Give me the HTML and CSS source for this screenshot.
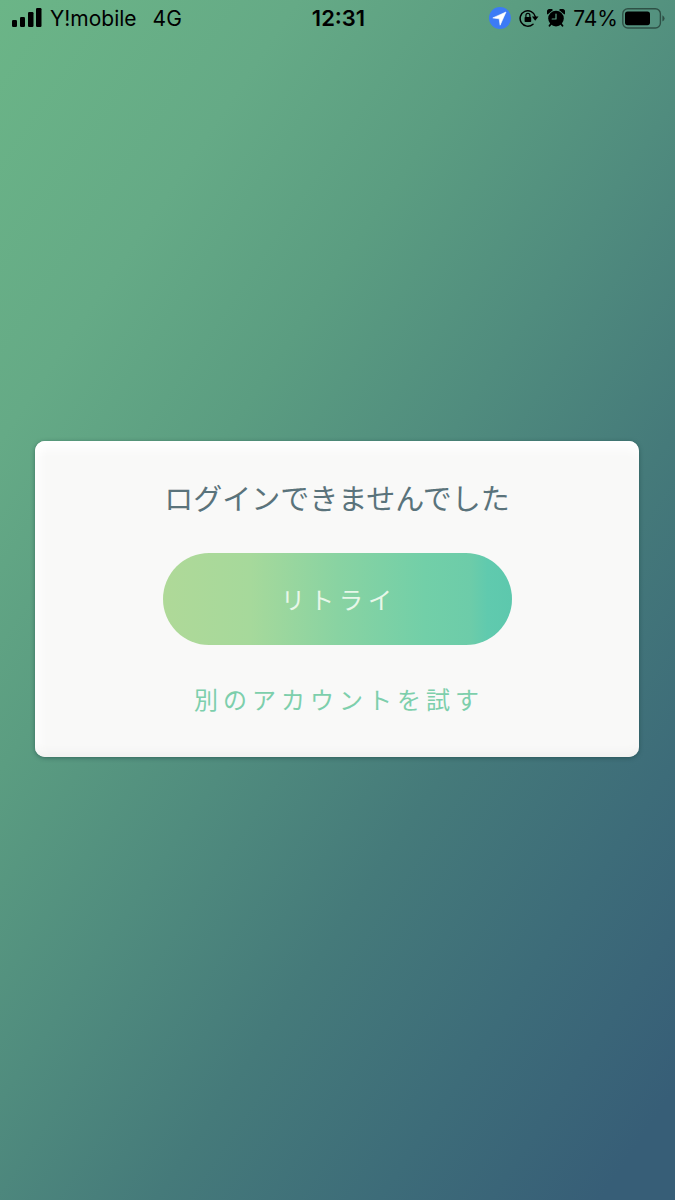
FILE: index.html
```html
<!DOCTYPE html>
<html lang="ja">
<head>
<meta charset="utf-8">
<meta name="viewport" content="width=device-width, initial-scale=1">
<title>ログイン</title>
<link rel="stylesheet" href="styles.css">
</head>
<body>
<div class="screen">
  <header class="status">
    <div class="status-left">
      <svg class="signal" viewBox="0 0 30 20" aria-hidden="true">
        <rect x="0" y="12" width="5" height="7" rx="1.2"/>
        <rect x="8" y="9" width="5" height="10" rx="1.2"/>
        <rect x="16" y="4" width="5.5" height="15" rx="1.2"/>
        <rect x="24" y="0" width="5.5" height="19" rx="1.2"/>
      </svg>
      <span>Y!mobile</span>
      <span class="network">4G</span>
    </div>
    <time class="clock">12:31</time>
    <div class="status-right">
      <svg class="location" viewBox="0 0 22 22" aria-hidden="true">
        <circle cx="11" cy="11" r="11" fill="#3c7bf6"/>
        <path d="M17 5 L3.8 10.9 L10.2 11.8 L11.1 18.2 Z" fill="#fff" stroke="#fff" stroke-width=".6" stroke-linejoin="round"/>
      </svg>
      <svg class="lock" viewBox="0 0 20 20" aria-hidden="true">
        <path d="M14 16.2 A7.7 7.7 0 1 1 16.3 8.6" fill="none" stroke="#000" stroke-width="1.5" stroke-linecap="round"/>
        <path d="M12.9 8.6 H19.5 L16.2 12.8 Z"/>
        <rect x="5.6" y="9" width="6.6" height="5" rx=".7"/>
        <path d="M6.9 9 V7.4 a2 2 0 0 1 4 0 V9" fill="none" stroke="#000" stroke-width="1.2"/>
      </svg>
      <svg class="alarm" viewBox="0 0 18 18" aria-hidden="true">
        <circle cx="9" cy="9.6" r="7.8"/>
        <path d="M.6 5.6 A3.2 3.2 0 0 1 6 1 Z M17.4 5.6 A3.2 3.2 0 0 0 12 1 Z"/>
        <path d="M4.2 14.6 L2.5 16.8 M13.8 14.6 L15.5 16.8" stroke="#000" stroke-width="1.8" stroke-linecap="round"/>
        <path d="M9 5 V10 H5.2" fill="none" stroke="#5b9e83" stroke-width="1.2" stroke-linecap="round" stroke-linejoin="round"/>
      </svg>
      <span class="percent">74%</span>
      <svg class="battery" viewBox="0 0 43 21" aria-hidden="true">
        <rect x=".8" y=".8" width="37.6" height="19.2" rx="5" fill="none" stroke="#000" stroke-opacity=".45" stroke-width="1.4"/>
        <rect x="3" y="3.4" width="25" height="13.8" rx="2.6"/>
        <path d="M40.4 7.2 Q42.6 8.4 42.6 10.4 T40.4 13.6 Z" fill-opacity=".45"/>
      </svg>
    </div>
  </header>
  <main class="stage">
    <section class="dialog" aria-labelledby="message">
      <h1 class="message" id="message">ログインできませんでした</h1>
      <button class="retry" type="button">リトライ</button>
      <a class="other" href="#">別のアカウントを試す</a>
    </section>
  </main>
</div>
</body>
</html>
```
FILE: styles.css
```css
* { box-sizing: border-box; }

body {
  margin: 0;
  font-family: Inter, "Noto Sans CJK JP", sans-serif;
  color: #000;
}

.screen {
  display: grid;
  min-height: 100vh;
  background: linear-gradient(124deg, #6bb587 0%, #65aa86 20%, #5b9d81 35%, #508c7e 50%, #457a7a 65%, #3d6c79 80%, #375e77 95%, #375e77 100%);
}

.status,
.stage {
  grid-area: 1 / 1;
}

.status {
  display: grid;
  grid-template-columns: 1fr auto 1fr;
  align-items: center;
  align-self: start;
  height: 36px;
  padding: 0 10px 0 12px;
  font-size: 21px;
  line-height: 29px;
}

.status-left,
.status-right {
  display: flex;
  align-items: center;
}

.status-right { justify-content: flex-end; }

.signal {
  width: 30px;
  height: 20px;
  margin-right: 8px;
}

.network { margin-left: 16px; }

.clock {
  font-size: 22px;
  font-weight: 600;
}

.location { width: 22px; height: 22px; }
.lock { width: 20px; height: 20px; margin-left: 8px; }
.alarm { width: 18px; height: 18px; margin-left: 8px; }
.percent { margin: 0 4px 0 8px; }
.battery { width: 43px; height: 21px; }

.stage {
  display: grid;
  align-items: center;
  padding: 0 36px 2px 35px;
}

.dialog {
  display: flex;
  flex-direction: column;
  align-items: center;
  padding: 34px 24px 36px;
  border-radius: 10px;
  background: #f9f9f8;
  box-shadow: 0 1px 4px rgba(20, 60, 60, .5), inset 0 12px 12px -4px #fff, inset 0 -10px 12px -8px #eeeeec, inset 12px 0 12px -8px #fff;
  font-family: "Noto Sans CJK JP", sans-serif;
  font-weight: 400;
}

.message {
  margin: 0;
  font-size: 29px;
  font-weight: 400;
  line-height: 44px;
  color: #5a737b;
}

.retry {
  width: 349px;
  max-width: 100%;
  height: 92px;
  margin: 34px 0 32px;
  padding: 0 0 2px 4px;
  border: 0;
  border-radius: 46px;
  background: linear-gradient(90deg, #afd998 0%, #a6d99b 25%, #89d3a2 50%, #72cfa8 75%, #6dcca9 88%, #60caae 93%, #5dc8ad 100%);
  font: inherit;
  font-size: 24px;
  letter-spacing: 5px;
  color: #e8f7e9;
}

.other {
  padding-left: 4px;
  font-size: 24px;
  line-height: 44px;
  letter-spacing: 5px;
  text-decoration: none;
  color: #7dcfac;
}
```
